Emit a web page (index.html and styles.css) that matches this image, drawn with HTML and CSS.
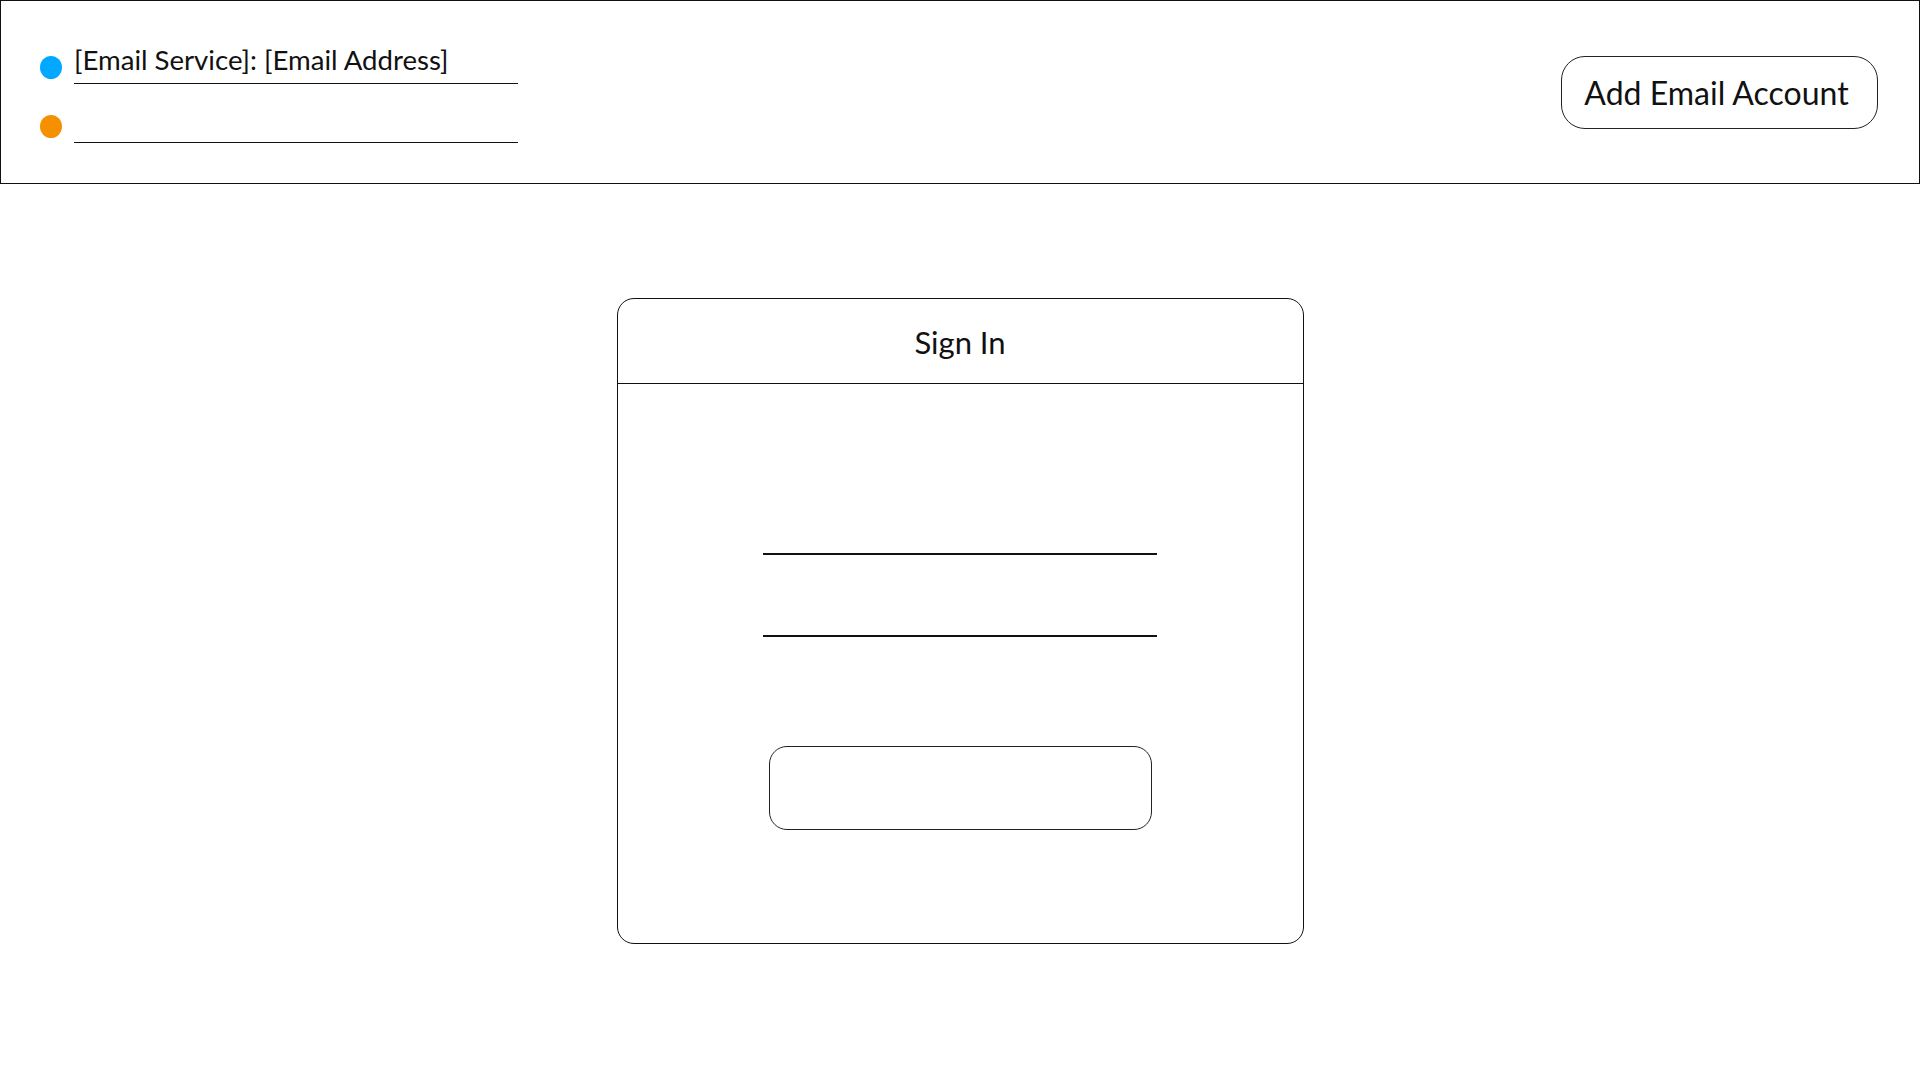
FILE: index.html
```html
<!DOCTYPE html>
<html lang="en">
<head>
<meta charset="utf-8">
<title>Email Accounts</title>
<link rel="stylesheet" href="styles.css">
</head>
<body>
<header class="topbar">
  <div class="accounts">
    <div class="account-row">
      <span class="dot dot-blue"></span>
      <div class="account-field">[Email Service]: [Email Address]</div>
    </div>
    <div class="account-row">
      <span class="dot dot-orange"></span>
      <div class="account-field"></div>
    </div>
  </div>
  <button class="add-btn" type="button">Add Email Account</button>
</header>
<main class="stage">
  <section class="card">
    <div class="card-header">Sign In</div>
    <div class="card-body">
      <div class="line-field"></div>
      <div class="line-field"></div>
      <div class="submit-box"></div>
    </div>
  </section>
</main>
</body>
</html>
```
FILE: styles.css
```css
* { box-sizing: border-box; }
html, body { margin: 0; padding: 0; background: #fff; }
body {
  font-family: Lato, "Noto Sans", "Liberation Sans", sans-serif;
  color: #111;
  width: 1920px;
  height: 1080px;
  overflow: hidden;
}
.topbar {
  height: 184px;
  border: 1px solid #111;
  display: flex;
  align-items: center;
  justify-content: space-between;
  padding: 0 41px 0 39px;
}
.accounts {
  align-self: flex-start;
  padding-top: 43px;
  display: flex;
  flex-direction: column;
  gap: 19px;
}
.account-row {
  display: flex;
  align-items: center;
}
.dot {
  width: 22px;
  height: 23px;
  border-radius: 50%;
  margin-top: 6px;
  margin-right: 12px;
  flex: none;
}
.dot-blue { background: #00a8ff; }
.dot-orange { background: #f59000; }
.account-field {
  width: 444px;
  height: 40px;
  line-height: 32px;
  padding: 0;
  font-size: 27.6px;
  border-bottom: 1px solid #111;
  white-space: nowrap;
}
.add-btn {
  width: 317px;
  height: 73px;
  border: 1px solid #222;
  border-radius: 24px;
  background: #fff;
  font-family: inherit;
  font-size: 32px;
  color: #111;
  padding: 0 6px 0 0;
  cursor: pointer;
}
.stage {
  display: flex;
  justify-content: center;
  padding-top: 114px;
}
.card {
  width: 687px;
  height: 646px;
  border: 1px solid #111;
  border-radius: 17px;
  display: flex;
  flex-direction: column;
}
.card-header {
  height: 85px;
  border-bottom: 1px solid #111;
  display: flex;
  align-items: center;
  justify-content: center;
  font-size: 31px;
  padding-top: 1px;
}
.card-body {
  display: flex;
  flex-direction: column;
  align-items: center;
  padding-top: 129px;
}
.line-field {
  width: 394px;
  height: 42px;
  border-bottom: 2px solid #111;
}
.line-field + .line-field { margin-top: 40px; }
.submit-box {
  width: 383px;
  height: 84px;
  margin-top: 109px;
  border: 1px solid #222;
  border-radius: 18px;
}
```
